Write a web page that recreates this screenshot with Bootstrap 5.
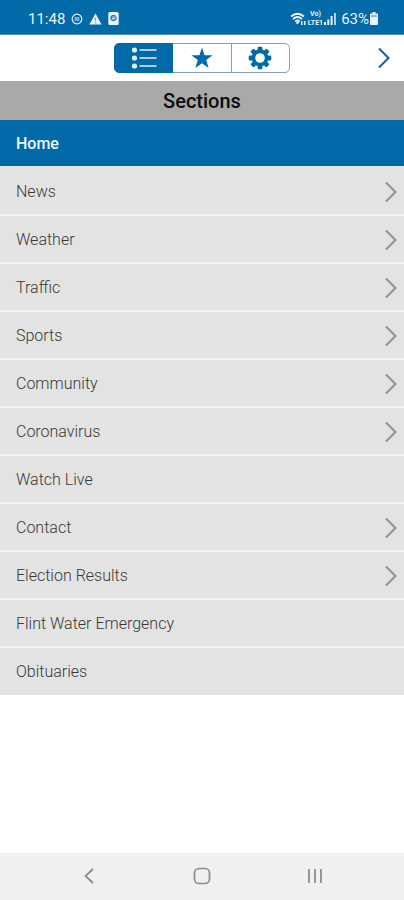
<!DOCTYPE html>
<html lang="en">
<head>
<meta charset="utf-8">
<meta name="viewport" content="width=device-width, initial-scale=1">
<title>Sections</title>
<link href="https://cdn.jsdelivr.net/npm/bootstrap@5.3.0/dist/css/bootstrap.min.css" rel="stylesheet">
<style>
  :root { --brand: #026aa7; --line: #8a9dbd; }
  body { font-family: Roboto, "Liberation Sans", sans-serif; font-size: 16px; line-height: 24px; color: #505050; background: #fff; }
  svg { display: block; flex: none; }
  .status-bar { background: var(--brand); color: #e8f3fb; height: 35px; padding: 3px 26px 0 28px; font-weight: 400; font-size: 15px; border-bottom: 1px solid #5b93c0; }
  .status-icons { gap: 6px; }
  .signal-icons { gap: 1px; }
  .volte { font-size: 7px; line-height: 9px; font-weight: 700; text-align: center; }
  .battery-text { margin-left: 3px; }
  .toolbar { height: 46px; }
  .tabs { width: 176px; height: 30px; }
  .tabs .btn { --bs-btn-color: var(--brand); --bs-btn-border-color: var(--line); --bs-btn-border-radius: 5px; --bs-btn-active-bg: var(--brand); --bs-btn-active-border-color: var(--brand); --bs-btn-active-color: #e3f0f8; }
  .next-btn { color: #1559a5; --bs-btn-active-border-color: transparent; }
  .section-title { background: #a9a9a9; color: #0c0c0c; font-size: 20px; font-weight: 500; height: 39px; padding-top: 1px; }
  .menu { --bs-list-group-bg: #e3e3e3; --bs-list-group-color: #383838; --bs-list-group-action-color: #383838; --bs-list-group-border-color: #f3f3f3; --bs-list-group-border-width: 2px; --bs-list-group-active-bg: var(--brand); --bs-list-group-active-color: #eff8ff; --bs-list-group-active-border-color: #dfe8ee; --bs-list-group-item-padding-x: 16px; }
  .menu .list-group-item { padding-top: 12px; padding-bottom: 10px; padding-right: 6px; height: 48px; font-weight: 300; }
  .menu .list-group-item:last-child { height: 47px; }
  .menu .list-group-item.active { font-weight: 500; margin-top: 0; border-top: 0; border-bottom-width: 2px; }
  .menu svg { color: #919191; }
  .system-nav { background: #f0f0f0; height: 47px; padding: 0 32px 2px; }
  .system-nav .btn { color: #8c8c8c; }
</style>
<script src="https://cdn.jsdelivr.net/npm/bootstrap@5.3.0/dist/js/bootstrap.bundle.min.js" defer></script>
</head>
<body class="min-vh-100 d-flex flex-column">
<svg width="0" height="0" class="d-none" aria-hidden="true">
  <symbol id="chevron" viewBox="0 0 14 22"><path d="M2 1.5 11.5 11 2 20.500" fill="none" stroke="currentColor" stroke-width="2"/></symbol>
</svg>

<header>
  <div class="status-bar d-flex align-items-center justify-content-between">
    <div class="status-icons d-flex align-items-center">
      <span>11:48</span>
      <svg width="12" height="12" viewBox="0 0 12 12" fill="none" stroke="currentColor" stroke-width="1.200"><circle cx="6" cy="6" r="4.800"/><path d="M3.500 5h5M3.500 7h5"/></svg>
      <svg width="13" height="12" viewBox="0 0 13 12"><path fill="currentColor" d="M6.500 .5 12.700 11.500H.3z"/><path d="M6.500 4.500v3.500M6.500 9v1.300" stroke="#6ea7ce" stroke-width="1.300"/></svg>
      <svg width="11" height="13" viewBox="0 0 11 13"><rect x=".3" width="10.400" height="13" rx="1.500" fill="currentColor"/><circle cx="5.500" cy="6" r="2.700" fill="#6ea7ce" stroke="#026aa7"/><path d="M4 6l1.300 1.200L7.500 5" stroke="#e8f3fb" fill="none"/></svg>
    </div>
    <div class="signal-icons d-flex align-items-center">
      <svg width="17" height="14" viewBox="0 0 17 14" fill="none" stroke="currentColor"><path d="M1 4.500Q7.500-1 14 4.500M3 7q4.500-4 9 0M5.200 9.300q2.300-2 4.600 0" stroke-width="1.700"/><path d="M6 10h3L7.500 12z" fill="currentColor"/><path d="M11.800 9v4M14.800 9v4" stroke-width="1.500"/></svg>
      <span class="volte">Vo)<br>LTE1</span>
      <svg width="13" height="13" viewBox="0 0 13 13" fill="currentColor"><path d="M0 10h2v3H0zM3.300 7.500h2V13h-2zM6.600 4h2v9h-2z"/><path d="M10 1h2v12h-2z" opacity=".75"/></svg>
      <span class="battery-text">63%</span>
      <svg width="8" height="13" viewBox="0 0 8 13"><path fill="currentColor" d="M2.500 0h3v1.500H7q1 0 1 1V12q0 1-1 1H1q-1 0-1-1V2.500q0-1 1-1h1.500z"/><path d="M1 3h6v2H1z" fill="#8bbadb"/></svg>
    </div>
  </div>

  <nav class="toolbar row g-0 align-items-center" aria-label="Menu views">
    <div class="col"></div>
    <div class="tabs btn-group col-auto">
      <button type="button" class="btn active w-100 p-0 d-flex align-items-center justify-content-center" aria-label="Sections list">
        <svg width="26" height="22" viewBox="0 0 26 22" fill="currentColor"><circle cx="3.500" cy="3" r="2.600"/><circle cx="3.500" cy="11" r="2.600"/><circle cx="3.500" cy="19" r="2.600"/><path d="M8.500 2.200h17v1.600h-17zM8.500 10.200h17v1.600h-17zM8.500 18.200h17v1.600h-17z"/></svg>
      </button>
      <button type="button" class="btn w-100 p-0 d-flex align-items-center justify-content-center" aria-label="Favorites">
        <svg width="22" height="22" viewBox="0 0 22 22" fill="currentColor"><path d="M11 .8 13.600 8.300H21.700L15.200 13 17.600 20.900 11 16.200 4.400 20.900 6.800 13 .3 8.300H8.400z"/></svg>
      </button>
      <button type="button" class="btn w-100 p-0 d-flex align-items-center justify-content-center" aria-label="Settings">
        <svg width="24" height="24" viewBox="-12 -12 24 24"><g fill="currentColor"><g id="teeth"><rect x="-2.400" y="-11.300" width="4.800" height="22.600" rx="1.200"/><rect x="-11.300" y="-2.400" width="22.600" height="4.800" rx="1.200"/></g><use href="#teeth" transform="rotate(45)"/><circle r="8.400"/></g><circle r="4.800" fill="#fff"/></svg>
      </button>
    </div>
    <div class="col d-flex justify-content-end">
      <button type="button" class="next-btn btn p-1 border-0 me-2" aria-label="Next"><svg width="16" height="22"><use href="#chevron"/></svg></button>
    </div>
  </nav>
  <h1 class="section-title m-0 d-flex align-items-center justify-content-center">Sections</h1>
</header>

<main class="flex-grow-1">
  <nav class="menu list-group list-group-flush" aria-label="Sections">
    <a href="#" class="list-group-item list-group-item-action active" aria-current="page">Home</a>
    <a href="#" class="list-group-item list-group-item-action d-flex justify-content-between align-items-center">News<svg width="14" height="22"><use href="#chevron"/></svg></a>
    <a href="#" class="list-group-item list-group-item-action d-flex justify-content-between align-items-center">Weather<svg width="14" height="22"><use href="#chevron"/></svg></a>
    <a href="#" class="list-group-item list-group-item-action d-flex justify-content-between align-items-center">Traffic<svg width="14" height="22"><use href="#chevron"/></svg></a>
    <a href="#" class="list-group-item list-group-item-action d-flex justify-content-between align-items-center">Sports<svg width="14" height="22"><use href="#chevron"/></svg></a>
    <a href="#" class="list-group-item list-group-item-action d-flex justify-content-between align-items-center">Community<svg width="14" height="22"><use href="#chevron"/></svg></a>
    <a href="#" class="list-group-item list-group-item-action d-flex justify-content-between align-items-center">Coronavirus<svg width="14" height="22"><use href="#chevron"/></svg></a>
    <a href="#" class="list-group-item list-group-item-action">Watch Live</a>
    <a href="#" class="list-group-item list-group-item-action d-flex justify-content-between align-items-center">Contact<svg width="14" height="22"><use href="#chevron"/></svg></a>
    <a href="#" class="list-group-item list-group-item-action d-flex justify-content-between align-items-center">Election Results<svg width="14" height="22"><use href="#chevron"/></svg></a>
    <a href="#" class="list-group-item list-group-item-action">Flint Water Emergency</a>
    <a href="#" class="list-group-item list-group-item-action">Obituaries</a>
  </nav>
</main>

<footer class="system-nav d-flex align-items-center">
  <button type="button" class="btn border-0 p-2 flex-fill d-flex justify-content-center" aria-label="Back"><svg width="18" height="18" viewBox="0 0 18 18"><path d="M13 2 5.500 9l7.500 7" fill="none" stroke="currentColor" stroke-width="1.800"/></svg></button>
  <button type="button" class="btn border-0 p-2 flex-fill d-flex justify-content-center" aria-label="Home screen"><svg width="18" height="18" viewBox="0 0 18 18"><rect x="1.500" y="1.500" width="15" height="15" rx="4.500" fill="none" stroke="currentColor" stroke-width="1.700"/></svg></button>
  <button type="button" class="btn border-0 p-2 flex-fill d-flex justify-content-center" aria-label="Recent apps"><svg width="18" height="18" viewBox="0 0 18 18"><path d="M3 2v14M9 2v14M15 2v14" stroke="currentColor" stroke-width="1.800"/></svg></button>
</footer>
</body>
</html>
